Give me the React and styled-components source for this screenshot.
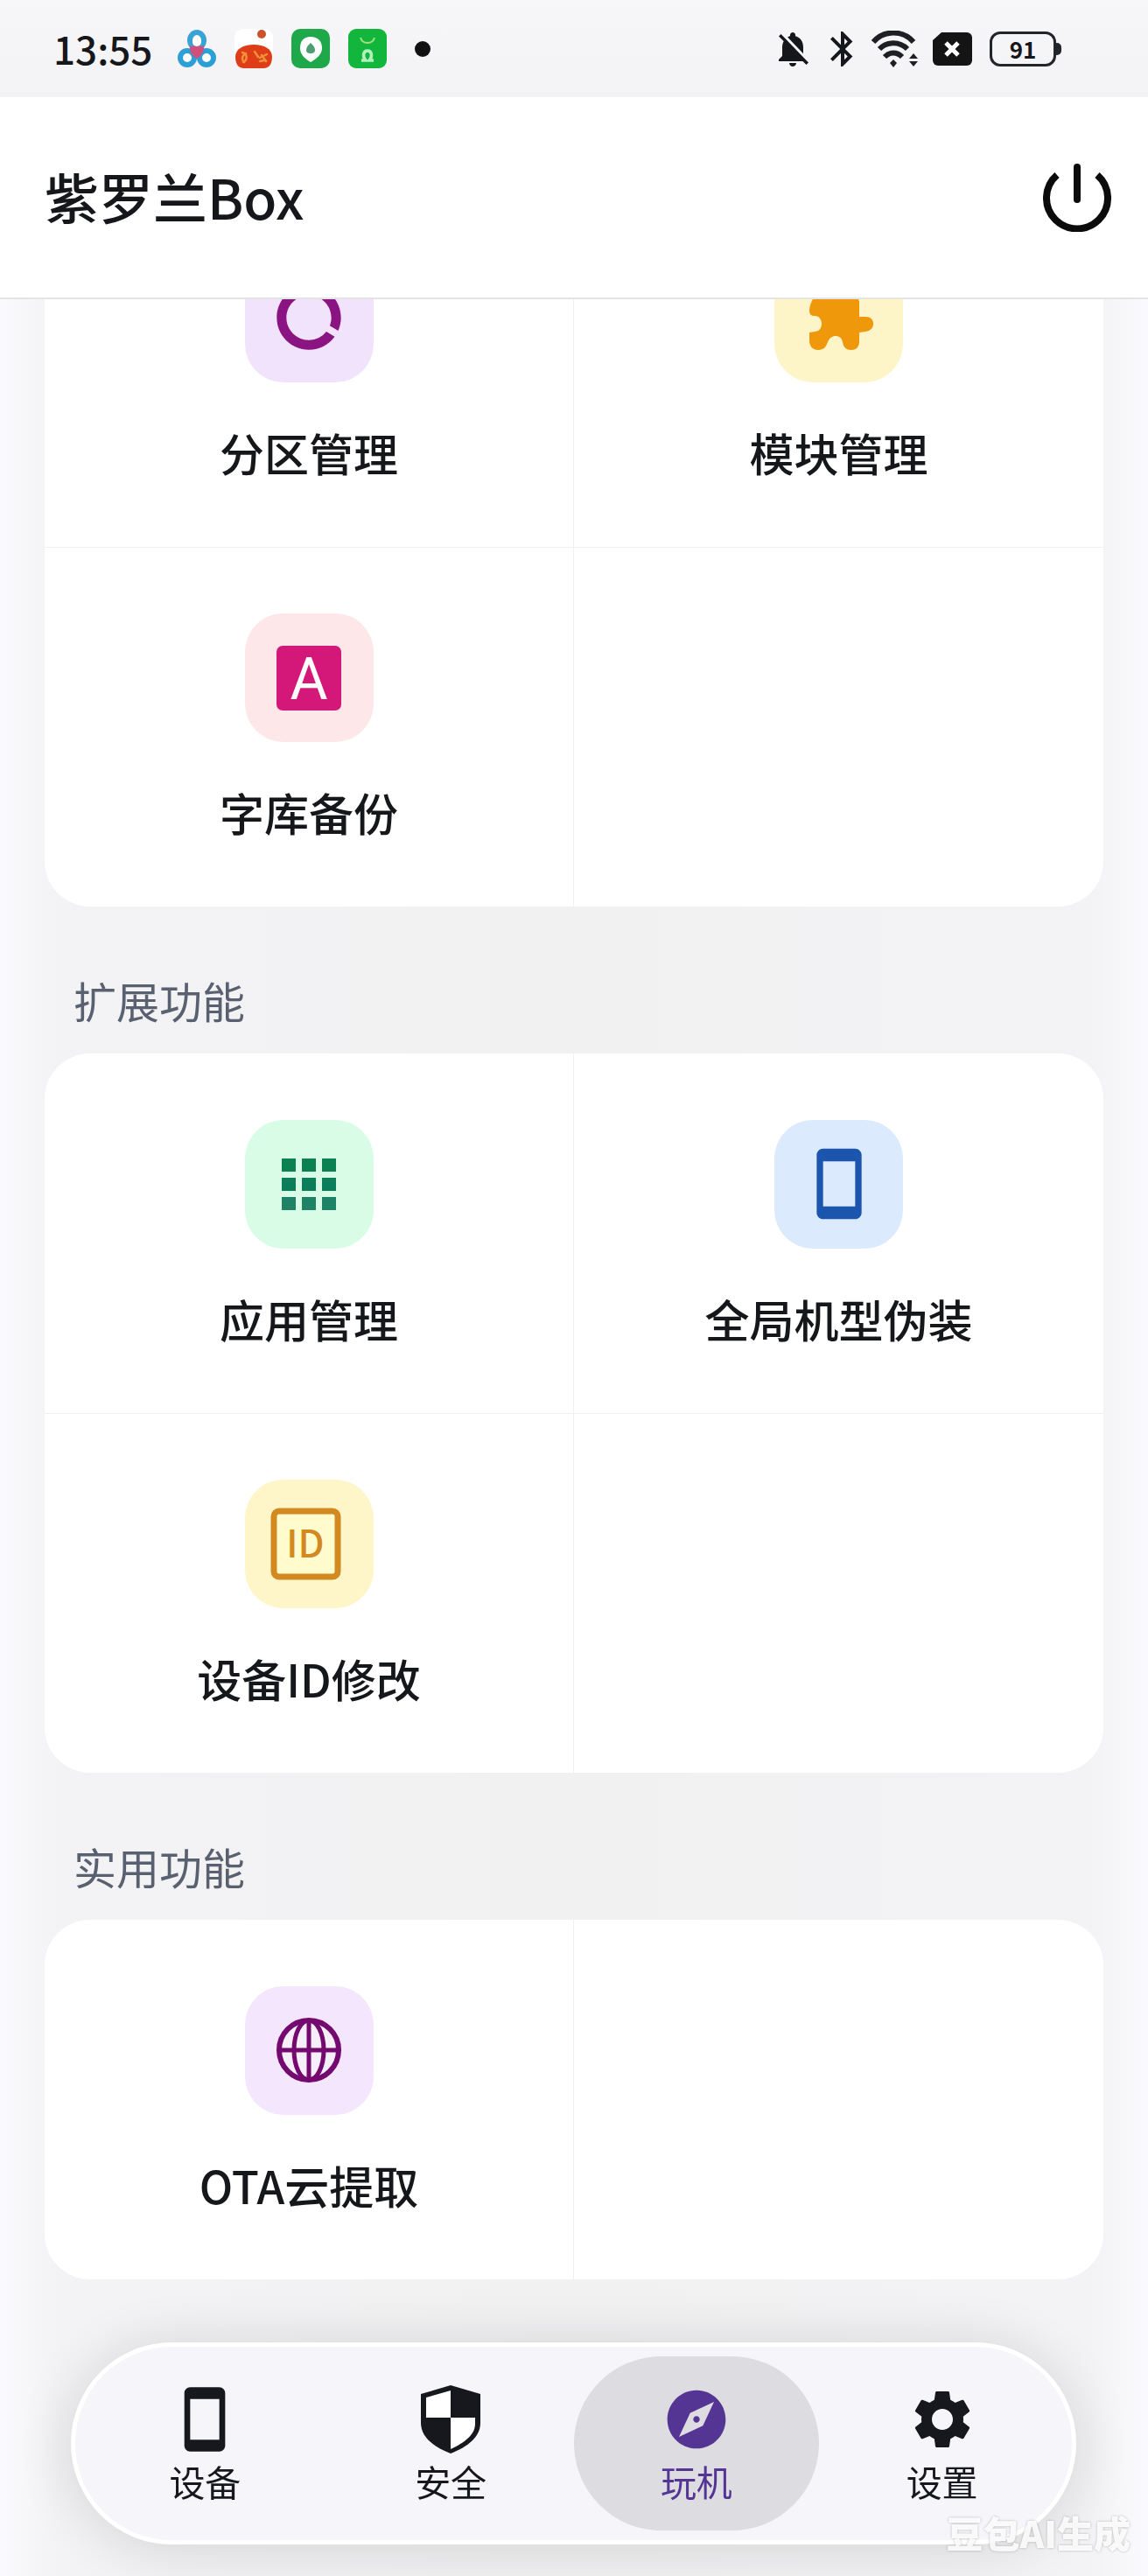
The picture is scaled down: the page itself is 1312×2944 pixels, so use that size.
import React, { useState } from "react";
import styled, { createGlobalStyle, css } from "styled-components";
import {
  MdBluetooth,
  MdDataUsage,
  MdExplore,
  MdNotificationsOff,
  MdSettings,
  MdStayCurrentPortrait,
} from "react-icons/md";

const GlobalStyle = createGlobalStyle`
  * {
    box-sizing: border-box;
  }
  body {
    margin: 0;
    background: #f9f9fd;
    color: #15171a;
    font-family: "Noto Sans CJK SC", "Noto Sans", sans-serif;
  }
  button {
    padding: 0;
    border: 0;
    background: none;
    color: inherit;
    font: inherit;
    cursor: pointer;
  }
  svg {
    display: block;
    flex: none;
  }
`

const Screen = styled.div`
  display: flex;
  flex-direction: column;
  height: 100vh;
  overflow: hidden;
`

/* status bar */

const StatusBar = styled.div`
  display: flex;
  justify-content: space-between;
  align-items: center;
  flex: none;
  height: 111px;
  padding: 0 99px 0 61px;
  background: linear-gradient(#f7f7fa, #f3f3f5);
`

const StatusGroup = styled.div`
  display: flex;
  align-items: center;
  gap: ${props => props.$gap}px;
`

const Clock = styled.time`
  margin-right: 8px;
  padding-bottom: 2px;
  font-size: 44px;
  line-height: 52px;
  font-weight: 500;
`

const MoreDot = styled.span`
  width: 18px;
  height: 18px;
  margin-left: 11px;
  border-radius: 50%;
  background: #111;
`

const Battery = styled.div`
  display: flex;
  align-items: center;
`

const BatteryBody = styled.span`
  width: 76px;
  height: 40px;
  border: 3px solid #23252c;
  border-radius: 12px;
  font-size: 26px;
  line-height: 33px;
  font-weight: 700;
  text-align: center;
`

const BatteryTip = styled.span`
  width: 6px;
  height: 14px;
  border-radius: 0 5px 5px 0;
  background: #23252c;
`

/* header */

const Header = styled.header`
  display: flex;
  justify-content: space-between;
  align-items: center;
  flex: none;
  height: 231px;
  padding: 0 42px 0 51px;
  background: #fff;
  border-bottom: 2px solid #e4e4e5;
`

const Title = styled.h1`
  margin: 0;
  padding-bottom: 4px;
  font-size: 62px;
  line-height: 76px;
  font-weight: 500;
`

/* content */

// reversed column, so the list opens scrolled to its end
const Scroller = styled.main`
  display: flex;
  flex-direction: column-reverse;
  flex: 1;
  min-height: 0;
  overflow-y: auto;
  scrollbar-width: none;
`

const Content = styled.div`
  flex: none;
  padding: 0 51px 339px;
  background: linear-gradient(
    90deg,
    #fafafe 0,
    #f8f8fb 20px,
    #f3f3f5 64px,
    #f1f1f2 50%,
    #f3f3f5 calc(100% - 64px),
    #f8f8fb calc(100% - 20px),
    #fafafe 100%
  );
`

const SectionTitle = styled.h2`
  margin: 0;
  padding: 75px 33px 29px;
  color: #596070;
  font-size: 49px;
  line-height: 64px;
  font-weight: 400;
`

const Card = styled.div`
  display: grid;
  grid-template-columns: 1fr 1fr;
  border-radius: 52px;
  background: #fff;
`

const cell = css`
  min-height: 411px;
  &:nth-child(odd) {
    border-right: 1px solid #f0f0f1;
  }
  &:nth-child(n + 3) {
    border-top: 1px solid #f0f0f1;
  }
`

const Tile = styled.button`
  ${cell}
  display: flex;
  flex-direction: column;
  align-items: center;
  justify-content: center;
  gap: 50px;
  padding-bottom: 3px;
`

const EmptyTile = styled.div`
  ${cell}
`

const TileIcon = styled.span`
  display: flex;
  align-items: center;
  justify-content: center;
  width: 147px;
  height: 147px;
  border-radius: 44px;
  background: ${props => props.$bg};
  color: ${props => props.$color};
`

const TileLabel = styled.span`
  font-size: 51px;
  line-height: 60px;
  font-weight: 500;
`

/* bottom bar */

const TabBar = styled.nav`
  position: fixed;
  left: 81px;
  right: 82px;
  bottom: 36px;
  display: flex;
  padding: 11px 8px;
  border: 5px solid #fff;
  border-radius: 116px;
  background: #f5f5fa;
  box-shadow: 0 4px 64px rgba(20, 20, 25, 0.14);
`

const Tab = styled.button`
  display: flex;
  flex: 1;
  flex-direction: column;
  align-items: center;
  gap: 6px;
  padding: 32px 0 33px;
  border-radius: 100px;
  color: ${props => (props.$active ? "#553594" : "#17181d")};
  background: ${props => (props.$active ? "#dcdce1" : "transparent")};
`

const TabLabel = styled.span`
  font-size: 41px;
  line-height: 48px;
`

const Watermark = styled.div`
  position: fixed;
  right: 20px;
  bottom: 20px;
  color: rgba(255, 255, 255, 0.9);
  font-size: 42px;
  line-height: 60px;
  font-weight: 900;
  text-shadow: 0 0 3px rgba(0, 0, 0, 0.26);
  pointer-events: none;
`

const TrefoilLogo = () => (
  <svg width="44" height="46" viewBox="0 0 44 46" fill="none" strokeWidth="6">
    <circle cx="11" cy="33" r="8" fill="#fff" stroke="#2c9fd6" />
    <circle cx="33" cy="33" r="8" fill="#fff" stroke="#2c9fd6" />
    <ellipse cx="22" cy="13" rx="8" ry="9" fill="#fff" stroke="#3aa3d6" />
    <path d="M14 19c2 2 4 0 8 0s6 2 8 0c1 7-3 12-8 15-5-3-9-8-8-15z" fill="#d0507c" />
    <circle cx="22" cy="15" r="5" fill="#fff" />
  </svg>
)

const TomatoLogo = () => (
  <svg width="44" height="46" viewBox="0 0 44 46">
    <rect width="44" height="44" rx="10" fill="#fff" />
    <circle cx="31" cy="6" r="5" fill="#c9542c" />
    <path d="M1 32c0-9 9-14 21-14s21 5 21 14c0 9-4 13-10 13H11C5 45 1 41 1 32z" fill="#df3d18" />
    <g fill="none" stroke="#f0913c" strokeWidth="2.5" strokeLinecap="round">
      <path d="M9 27c6 1 6 9 1 11M13 28c-5 3-5 7-2 10M23 26l4 6M31 30l5 7M37 29l-8 4M34 36l-5 1" />
    </g>
  </svg>
)

const PinLogo = () => (
  <svg width="44" height="46" viewBox="0 0 44 46">
    <rect width="44" height="45" rx="10" fill="#1fa84a" />
    <path d="M22 9c8 0 13 5 13 13 0 7-6 12-13 16C15 34 10 29 10 22 10 14 14 9 22 9z" fill="#fff" />
    <path d="M22 16c3 3 5 5 5 8s-2 4-5 4-5-1-5-4 2-5 5-8z" fill="#4f9d74" />
  </svg>
)

const BagLogo = () => (
  <svg width="44" height="46" viewBox="0 0 44 46" fill="none">
    <rect width="44" height="45" rx="9" fill="#13b63c" />
    <path d="M14 10c2 8 14 8 16 0" stroke="#a3e07c" strokeWidth="2" />
    <path d="M15 36h5c-4-4-3-11 2-11s6 7 2 11h5" stroke="#b4f0bd" strokeWidth="3.5" />
  </svg>
)

const WifiIcon = () => (
  <svg width="61" height="42" viewBox="0 0 61 42" fill="none" stroke="#1d1f24" strokeWidth="6">
    <path d="M2 13C14-1 36-1 48 13" />
    <path d="M9 21c9-9 23-9 32 0" />
    <path d="M15 30c6-6 14-6 20 0" />
    <path d="M25 33l4 4-4 5-4-5z" fill="#1d1f24" stroke="none" />
    <path d="M48 26l5 6H43zM48 41l5-6H43z" fill="#1d1f24" stroke="none" />
  </svg>
)

const NoSimIcon = () => (
  <svg width="56" height="38" viewBox="0 0 56 38">
    <path d="M10 0h29a6 6 0 0 1 6 6v26a6 6 0 0 1-6 6H6a6 6 0 0 1-6-6V9z" fill="#141414" />
    <path d="M15 12l14 14M29 12L15 26" stroke="#fff" strokeWidth="5" />
  </svg>
)

const PowerIcon = () => (
  <svg width="78" height="78" viewBox="0 0 78 78" fill="none" stroke="#0b0b0b" strokeWidth="8">
    <path d="M16 13a35 35 0 1 0 46 0" />
    <path d="M39 4v37" strokeLinecap="round" />
  </svg>
)

const PuzzleIcon = () => (
  <svg width="88" height="88" viewBox="0 0 88 88">
    <path
      d="M15 21C12 26 10 31 10 36c0 4 2 6 6 6 5 0 8 4 8 9s-3 9-8 9l-6 1v9c0 7 4 11 10 11 7 0 9-4 11-9 2-5 5-7 9-7s7 2 8 7c1 6 4 9 10 9s9-4 9-10V61l7-1c6-1 9-4 9-9s-3-8-9-8h-7V27c0-4-2-6-6-6H50c0-8-4-12-11-12s-11 4-11 12z"
      fill="#ef980c"
    />
  </svg>
)

const FontIcon = () => (
  <svg width="88" height="88" viewBox="0 0 88 88">
    <rect x="7" y="7" width="74" height="74" rx="7" fill="#d3187a" />
    <text x="44" y="68" fill="#fff" fontFamily="Roboto, sans-serif" fontSize="66" textAnchor="middle">A</text>
  </svg>
)

const GridIcon = () => (
  <svg width="88" height="88" viewBox="0 0 88 88">
    {[15, 37, 59].map((y, row) =>
      [13, 36, 59].map(x => (
        <rect key={x + "-" + y} x={x} y={y} width="16" height="15" fill={["#0b8152", "#0b7d5a", "#1d8266"][row]} />
      ))
    )}
  </svg>
)

const IdIcon = () => (
  <svg width="88" height="88" viewBox="0 0 88 88">
    <rect x="4" y="6" width="73" height="75" rx="6" fill="#fffbcd" stroke="#d28a20" strokeWidth="7" />
    <text x="40" y="59" fill="#d28a20" fontSize="43" fontWeight="500" textAnchor="middle">ID</text>
  </svg>
)

const GlobeIcon = () => (
  <svg width="88" height="88" viewBox="0 0 88 88" fill="none" stroke="#74096f" strokeWidth="5">
    <circle cx="44" cy="44" r="34" strokeWidth="6" fill="#f6effa" />
    <ellipse cx="44" cy="44" rx="17" ry="34" />
    <path d="M44 10v68M10 44h68" />
  </svg>
)

const ShieldIcon = () => (
  <svg width="80" height="80" viewBox="0 0 80 80">
    <path d="M40 1l34 10v33c0 16-14 27-34 35C20 71 6 60 6 44V11z" fill="#17181d" />
    <path d="M40 7v31H12V15z" fill="#fff" />
    <path d="M40 38h28v7c0 12-11 21-28 29z" fill="#fff" />
  </svg>
)

const sections = [
  {
    items: [
      { label: "分区管理", icon: <MdDataUsage size={88} />, bg: "#f1e3fc", color: "#8a1482" },
      { label: "模块管理", icon: <PuzzleIcon />, bg: "#fdf5c8" },
      { label: "字库备份", icon: <FontIcon />, bg: "#fde7e8" },
    ],
  },
  {
    title: "扩展功能",
    items: [
      { label: "应用管理", icon: <GridIcon />, bg: "#d9fce6" },
      { label: "全局机型伪装", icon: <MdStayCurrentPortrait size={88} />, bg: "#dbeafc", color: "#1b55ae" },
      { label: "设备ID修改", icon: <IdIcon />, bg: "#fef5c8" },
    ],
  },
  {
    title: "实用功能",
    items: [{ label: "OTA云提取", icon: <GlobeIcon />, bg: "#f4e6fc" }],
  },
]

const tabs = [
  { label: "设备", icon: <MdStayCurrentPortrait size={80} /> },
  { label: "安全", icon: <ShieldIcon /> },
  { label: "玩机", icon: <MdExplore size={80} /> },
  { label: "设置", icon: <MdSettings size={80} /> },
]

const Section = ({ title, items }) => (
  <section>
    {title && <SectionTitle>{title}</SectionTitle>}
    <Card>
      {items.map(item => (
        <Tile key={item.label} type="button">
          <TileIcon $bg={item.bg} $color={item.color}>{item.icon}</TileIcon>
          <TileLabel>{item.label}</TileLabel>
        </Tile>
      ))}
      {items.length % 2 === 1 && <EmptyTile />}
    </Card>
  </section>
)

const App = () => {
  const [active, setActive] = useState("玩机")

  return (
    <Screen>
      <GlobalStyle />
      <StatusBar>
        <StatusGroup $gap={21}>
          <Clock>13:55</Clock>
          <TrefoilLogo />
          <TomatoLogo />
          <PinLogo />
          <BagLogo />
          <MoreDot />
        </StatusGroup>
        <StatusGroup $gap={9}>
          <MdNotificationsOff size={48} />
          <MdBluetooth size={48} />
          <WifiIcon />
          <NoSimIcon />
          <Battery>
            <BatteryBody>91</BatteryBody>
            <BatteryTip />
          </Battery>
        </StatusGroup>
      </StatusBar>
      <Header>
        <Title>紫罗兰Box</Title>
        <button type="button" aria-label="电源">
          <PowerIcon />
        </button>
      </Header>
      <Scroller>
        <Content>
          {sections.map((section, i) => (
            <Section key={i} {...section} />
          ))}
        </Content>
      </Scroller>
      <TabBar>
        {tabs.map(tab => (
          <Tab
            key={tab.label}
            type="button"
            $active={tab.label === active}
            onClick={() => setActive(tab.label)}
          >
            {tab.icon}
            <TabLabel>{tab.label}</TabLabel>
          </Tab>
        ))}
      </TabBar>
      <Watermark>豆包AI生成</Watermark>
    </Screen>
  )
}

export default App
